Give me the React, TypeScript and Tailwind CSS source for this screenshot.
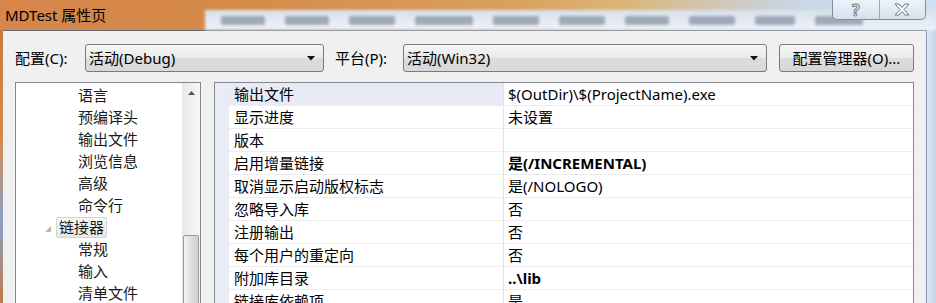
import React from "react";

const FONT = "font-[family-name:'Noto_Sans','Noto_Sans_CJK_SC',sans-serif]";

const treeItems: { label: string; level: number; selected?: boolean; expander?: boolean }[] = [
  { label: "语言", level: 2 },
  { label: "预编译头", level: 2 },
  { label: "输出文件", level: 2 },
  { label: "浏览信息", level: 2 },
  { label: "高级", level: 2 },
  { label: "命令行", level: 2 },
  { label: "链接器", level: 1, selected: true, expander: true },
  { label: "常规", level: 2 },
  { label: "输入", level: 2 },
  { label: "清单文件", level: 2 },
];

const rows: { name: string; value: string; bold?: boolean; hl?: boolean }[] = [
  { name: "输出文件", value: "$(OutDir)\\$(ProjectName).exe", hl: true },
  { name: "显示进度", value: "未设置" },
  { name: "版本", value: "" },
  { name: "启用增量链接", value: "是(/INCREMENTAL)", bold: true },
  { name: "取消显示启动版权标志", value: "是(/NOLOGO)" },
  { name: "忽略导入库", value: "否" },
  { name: "注册输出", value: "否" },
  { name: "每个用户的重定向", value: "否" },
  { name: "附加库目录", value: "..\\lib", bold: true },
  { name: "链接库依赖项", value: "是" },
];

function Arrow() {
  return (
    <svg width="8" height="5" viewBox="0 0 8 5" className="shrink-0">
      <path d="M0 0 L8 0 L4 4.5 Z" fill="#111" />
    </svg>
  );
}

function Combo({ text, width }: { text: string; width: string }) {
  return (
    <div
      className={`${width} h-[28px] flex items-center justify-between pl-[3px] pr-[8px] rounded-[3px] border border-[#7a7a7a] bg-[linear-gradient(#f6f6f6,#e9e9e9_50%,#dcdcdc_51%,#d9d9d9)] text-[15px] text-black`}
    >
      <span>{text}</span>
      <Arrow />
    </div>
  );
}

export default function App() {
  return (
    <div
      className={`${FONT} relative w-[936px] h-[303px] overflow-hidden bg-[linear-gradient(90deg,#d6864c_0%,#d58a47_25%,#d9a060_55%,#dcb270_65%,#c9d6e6_85%,#cfe0f0_100%)]`}
    >
      {/* Title / blurred desktop strip */}
      <div className="flex h-[30px]">
        <div className="w-[205px] pl-[5px] pt-[3px] text-[15px] text-black leading-[24px]">MDTest 属性页</div>
        <div className="flex-1 flex flex-col">
          <div className="h-[10px]" />
          <div className="flex-1 bg-[linear-gradient(#d8e0ea,#eef2f8)] flex items-center gap-[20px] pl-[16px] blur-[1.5px]">
            {[44, 44, 46, 58, 46, 46, 44, 46, 40, 48].map((w, i) => (
              <span key={i} className="h-[9px] rounded-[2px] bg-[#8d98aa] opacity-80" style={{ width: w }} />
            ))}
          </div>
        </div>
      </div>

      {/* help / close buttons */}
      <div className="absolute top-0 right-[10px] flex h-[20px] w-[94px] rounded-b-[5px] border border-t-0 border-[#7f8ea3] bg-[linear-gradient(#eef3f9,#d6e1ee)] overflow-hidden">
        <div className="flex-1 flex items-center justify-center border-r border-[#9aa8ba] text-[16px] font-bold text-white [-webkit-text-stroke:1px_#6b7788] leading-none">?</div>
        <div className="flex-1 flex items-center justify-center">
          <svg width="18" height="13" viewBox="0 0 18 13">
            <path d="M2 1 H6 L9 4.5 L12 1 H16 L11 6.5 L16 12 H12 L9 8.5 L6 12 H2 L7 6.5 Z" fill="#fff" stroke="#6b7788" strokeWidth="1" />
          </svg>
        </div>
      </div>

      <div className="flex h-[273px]">
        <div className="w-[3px] bg-[linear-gradient(#c97a40,#d58850_40%,#8aa0c8_70%,#c07a48)]" />
        {/* Client area */}
        <div className="w-[923px] border-t border-[#5f6b78] bg-[#f0f0f0] flex flex-col">
          {/* Config row */}
          <div className="flex items-center h-[28px] mt-[13px] pl-[12px] text-[15px] text-black">
            <span className="w-[70px]">配置(C):</span>
            <Combo text="活动(Debug)" width="w-[239px]" />
            <span className="ml-[11px] w-[68px]">平台(P):</span>
            <Combo text="活动(Win32)" width="w-[364px]" />
            <div className="ml-[12px] w-[135px] h-[28px] flex items-center justify-center rounded-[3px] border border-[#7a7a7a] bg-[linear-gradient(#f6f6f6,#ebebeb_50%,#dddddd_51%,#d6d6d6)]">
              配置管理器(O)...
            </div>
          </div>

          {/* Panels */}
          <div className="flex mt-[10px] pl-[12px]">
            {/* Tree */}
            <div className="w-[186px] h-[240px] border border-[#828790] bg-white flex">
              <div className="flex-1 pt-[1px]">
                {treeItems.map((t, i) => (
                  <div key={i} className="h-[22px] flex items-center text-[15px] text-[#1a1a1a]">
                    {t.level === 2 ? (
                      <span className="ml-[62px]">{t.label}</span>
                    ) : (
                      <>
                        <svg width="6" height="6" viewBox="0 0 6 6" className="ml-[29px] mt-[4px]">
                          <path d="M6 0 L6 6 L0 6 Z" fill="#b9b9b9" />
                        </svg>
                        <span className="ml-[5px] h-[21px] px-[2px] flex items-center rounded-[2px] border border-[#d4d4d4] bg-[linear-gradient(#f7f7f7,#e8e8e8)]">
                          {t.label}
                        </span>
                      </>
                    )}
                  </div>
                ))}
              </div>
              {/* Scrollbar */}
              <div className="w-[18px] bg-[linear-gradient(90deg,#e8e8e8,#f7f7f7)] flex flex-col">
                <div className="h-[20px] flex items-center justify-center">
                  <svg width="7" height="4" viewBox="0 0 7 4">
                    <path d="M0 4 L7 4 L3.5 0 Z" fill="#555" />
                  </svg>
                </div>
                <div className="h-[132px]" />
                <div className="mx-[1px] flex-1 rounded-[2px] border border-[#9a9a9a] bg-[linear-gradient(90deg,#f2f2f2,#dcdcdc_60%,#d0d0d0)]" />
              </div>
            </div>

            {/* Property grid */}
            <div className="ml-[13px] w-[700px] h-[240px] border border-[#828790] bg-white flex">
              <div className="w-[14px] bg-[#e9ebf5]" />
              <div className="flex-1 flex flex-col">
                {rows.map((r, i) => (
                  <div key={i} className={`h-[23px] flex border-b border-[#ececec] shrink-0 ${r.hl ? "bg-[#e8eaf6]" : ""}`}>
                    <div className="w-[275px] pl-[5px] flex items-center border-r border-[#e3e3e3] text-[15px] text-black">
                      {r.name}
                    </div>
                    <div className={`flex-1 pl-[4px] flex items-center text-[15px] text-black ${r.hl ? "bg-white" : ""} ${r.bold ? "font-bold" : ""}`}>
                      {r.value}
                    </div>
                  </div>
                ))}
              </div>
            </div>
          </div>
        </div>
        <div className="w-[10px] border-l border-[#8796a8] bg-[linear-gradient(90deg,#dde8f4,#c3d4e8)]" />
      </div>
    </div>
  );
}
